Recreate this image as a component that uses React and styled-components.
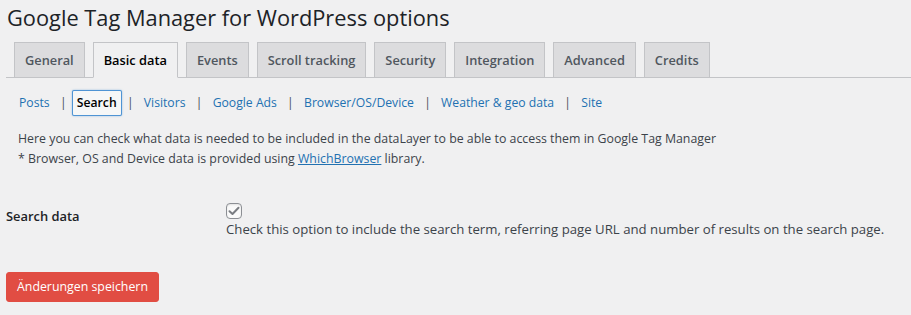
import React from 'react';
import styled, { createGlobalStyle } from 'styled-components';

const GlobalStyle = createGlobalStyle`
  html, body {
    margin: 0;
    padding: 0;
    background: #f0f0f1;
  }
  body {
    font-family: "Open Sans", "Noto Sans", sans-serif;
    font-size: 12.35px;
    line-height: 1.4em;
    color: #3c434a;
  }
`;

const Wrap = styled.div`
  padding: 0 0 0 6px;
`;

const Title = styled.h1`
  margin: 0;
  padding: 3px 0 0 1px;
  font-size: 21.8px;
  font-weight: 400;
  line-height: 29px;
  color: #1d2327;
`;

const TabBar = styled.nav`
  display: flex;
  gap: 8px;
  margin-top: 10px;
  padding-left: 8px;
  border-bottom: 1px solid #c3c4c7;
`;

const Tab = styled.a`
  display: block;
  margin-bottom: -1px;
  padding: 5px 10px;
  border: 1px solid #c3c4c7;
  background: ${(p) => (p.$active ? '#f0f0f1' : '#dcdcde')};
  border-bottom-color: ${(p) => (p.$active ? '#f0f0f1' : '#c3c4c7')};
  color: ${(p) => (p.$active ? '#000' : '#50575e')};
  font-size: 12.8px;
  font-weight: 600;
  line-height: 24px;
  text-decoration: none;
  white-space: nowrap;
`;

const SubNav = styled.ul`
  display: flex;
  align-items: center;
  list-style: none;
  margin: 13px 0 0 9px;
  padding: 0;
  font-size: 12.2px;
`;

const SubItem = styled.li`
  display: flex;
  align-items: center;
  color: #50575e;
`;

const Sep = styled.span`
  padding: 0 6px;
  color: #50575e;
  font-size: 13px;
`;

const SubLink = styled.a`
  padding: 3px 4px;
  color: ${(p) => (p.$active ? '#000' : '#2271b1')};
  font-weight: ${(p) => (p.$active ? 600 : 400)};
  text-decoration: none;
  line-height: 18px;
  border-radius: 1px;
  box-shadow: ${(p) =>
    p.$active ? '0 0 0 1px #4f94d4, 0 0 2px 1px rgba(79, 148, 212, 0.6)' : 'none'};
  background: ${(p) => (p.$active ? '#f6f7f7' : 'transparent')};
`;

const Intro = styled.p`
  margin: 14px 0 0 12px;
  line-height: 20px;
`;

const Link = styled.a`
  color: #2271b1;
  text-decoration: underline;
`;

const FormRow = styled.div`
  display: grid;
  grid-template-columns: 220px 1fr;
  margin-top: 34px;
`;

const Label = styled.label`
  padding-top: 5px;
  font-size: 12.9px;
  font-weight: 600;
  color: #1d2327;
  line-height: 1.3;
`;

const Field = styled.div`
  display: flex;
  flex-direction: column;
  align-items: flex-start;
`;

const Checkbox = styled.span`
  display: flex;
  align-items: center;
  justify-content: center;
  box-sizing: border-box;
  width: 16px;
  height: 16px;
  border: 1px solid #8c8f94;
  border-radius: 4px;
  background: #fafafa;
  box-shadow: inset 0 1px 2px rgba(0, 0, 0, 0.1);
`;

const Description = styled.p`
  margin: 1px 0 0;
  font-size: 13.2px;
  line-height: 18px;
  color: #3c434a;
`;

const SaveButton = styled.button`
  margin-top: 34px;
  padding: 0 10px;
  height: 30px;
  border: 1px solid #e14d43;
  border-radius: 3px;
  background: #e14d43;
  color: #fff;
  font-family: inherit;
  font-size: 12.35px;
  line-height: 28px;
  cursor: pointer;
`;

const tabs = ['General', 'Basic data', 'Events', 'Scroll tracking', 'Security', 'Integration', 'Advanced', 'Credits'];
const subs = ['Posts', 'Search', 'Visitors', 'Google Ads', 'Browser/OS/Device', 'Weather & geo data', 'Site'];

export default function App() {
  return (
    <>
      <GlobalStyle />
      <Wrap>
        <Title>Google Tag Manager for WordPress options</Title>
        <TabBar>
          {tabs.map((t) => (
            <Tab key={t} href="#" $active={t === 'Basic data'}>{t}</Tab>
          ))}
        </TabBar>
        <SubNav>
          {subs.map((s, i) => (
            <SubItem key={s}>
              {i > 0 && <Sep>|</Sep>}
              <SubLink href="#" $active={s === 'Search'}>{s}</SubLink>
            </SubItem>
          ))}
        </SubNav>
        <Intro>
          Here you can check what data is needed to be included in the dataLayer to be able to access them in Google Tag Manager
          <br />
          * Browser, OS and Device data is provided using <Link href="#">WhichBrowser</Link> library.
        </Intro>
        <FormRow>
          <Label>Search data</Label>
          <Field>
            <Checkbox>
              <svg width="12" height="10" viewBox="0 0 12 10">
                <path d="M1.5 5.2 L4.5 8 L10.5 1.8" fill="none" stroke="#7a7d82" strokeWidth="2" strokeLinecap="round" strokeLinejoin="round" />
              </svg>
            </Checkbox>
            <Description>
              Check this option to include the search term, referring page URL and number of results on the search page.
            </Description>
          </Field>
        </FormRow>
        <SaveButton>Änderungen speichern</SaveButton>
      </Wrap>
    </>
  );
}
